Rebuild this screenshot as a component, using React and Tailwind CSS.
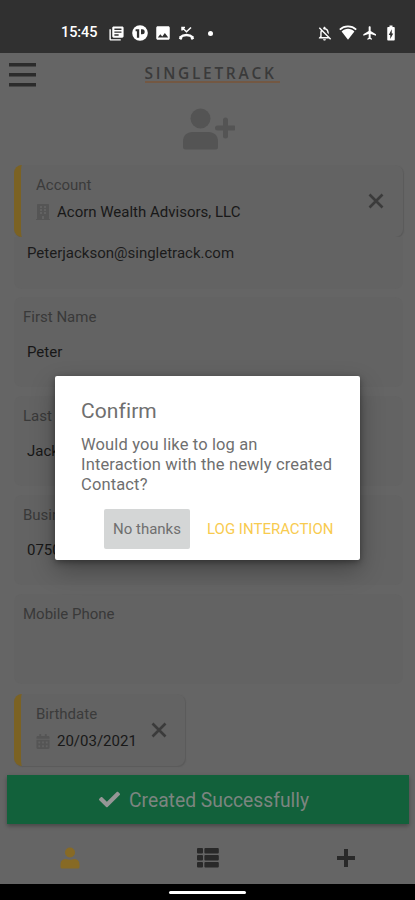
import React from "react";
import { FaCheck, FaBuilding, FaCalendarAlt } from "react-icons/fa";
import {
    MdLibraryBooks,
    MdImage,
    MdFlight,
    MdBatteryChargingFull,
    MdOutlineNotificationsOff,
} from "react-icons/md";

const fields = [
    { label: "First Name", value: "Peter" },
    { label: "Last Name", value: "Jackson" },
    { label: "Business Phone", value: "07500000000" },
    { label: "Mobile Phone", value: "" },
];

// -----------------------------
// Icons
// -----------------------------
const ParkingIcon = () => (
    <svg viewBox="0 0 16 16" className="w-4 h-4">
        <circle cx="8" cy="8" r="7.8" fill="#fff" />
        <path d="M3.6 4.2h3.6v8.6H4.900V6.200H3.600zM9 4.200h1.200a2.500 2.500 0 0 1 0 5H9z" fill="#303030" />
    </svg>
);

const MissedCallIcon = () => (
    <svg viewBox="0 0 17 16" className="w-[17px] h-4" fill="none" stroke="#fff">
        <path d="M4 5.500V2.500h3M4 2.500l4.500 4.300 4.500-4.300" strokeWidth="1.500" />
        <path d="M1.800 12.700c4-3.700 9.400-3.700 13.400 0" strokeWidth="2.400" />
        <path d="M1.500 12.300l2.400 1.500M15.500 12.300l-2.400 1.500" strokeWidth="2.600" />
    </svg>
);

const WifiIcon = () => (
    <svg viewBox="0 0 18 16" className="w-[18px] h-4">
        <path d="M.8 4.6C5.4.4 12.6.4 17.2 4.6" fill="none" stroke="#fff" strokeWidth="1.8" />
        <path d="M2.600 6.400c3.700-3.500 9.100-3.500 12.800 0L9 14.800z" fill="#fff" />
    </svg>
);

const MenuIcon = () => (
    <svg viewBox="0 0 28 24" className="w-7 h-6" fill="#2b2b2b">
        <rect y="0" width="27" height="3.500" />
        <rect y="10" width="27" height="3.500" />
        <rect y="20" width="27" height="3.500" />
    </svg>
);

const CloseIcon = () => (
    <svg viewBox="0 0 24 24" className="w-6 h-6" fill="none">
        <path d="M5.500 5.500l13 13M18.500 5.500l-13 13" stroke="#3b3b3b" strokeWidth="2.600" />
    </svg>
);

const UserPlusIcon = () => (
    <svg viewBox="0 0 52 42" className="w-[52px] h-[42px]" fill="#545454">
        <circle cx="17.500" cy="10.500" r="10" />
        <path d="M0 39v-5.500C0 27.500 4 24 9.500 24h16c5.500 0 9.500 3.500 9.500 9.500V39q0 2.500-2.500 2.500h-30Q0 41.500 0 39z" />
        <path d="M42.500 12v16M34.500 20h16" stroke="#545454" strokeWidth="5" strokeLinecap="round" />
    </svg>
);

const UserIcon = () => (
    <svg viewBox="0 0 20 22" className="w-5 h-[22px]" fill="#876a25">
        <circle cx="10" cy="5.500" r="5" />
        <path d="M.5 20v-2.500c0-3.300 2-5.500 5.500-5.500 2.500 1 5.500 1 8 0 3.500 0 5.500 2.200 5.500 5.500V20q0 1.500-1.500 1.500H2Q.5 21.500.5 20z" />
    </svg>
);

const ListIcon = () => (
    <svg viewBox="0 0 22 20" className="w-[22px] h-5" fill="#292929">
        {[0, 7, 14].map((y) => (
            <g key={y}>
                <rect y={y} width="6" height="5.400" rx="1" />
                <rect x="7.400" y={y} width="14.400" height="5.400" rx="1" />
            </g>
        ))}
    </svg>
);

const PlusIcon = () => (
    <svg viewBox="0 0 20 20" className="w-5 h-5" fill="none">
        <path d="M10 1v18M1 10h18" stroke="#292929" strokeWidth="4" />
    </svg>
);

// -----------------------------
// Layout parts
// -----------------------------
const StatusBar = () => (
    <div className="h-[53px] shrink-0 bg-[#303030] flex items-end justify-between pl-[61px] pr-[15px] pb-3 text-white">
        <div className="flex items-center h-4">
            <span className="text-[14.500px] font-medium leading-4 w-[47px] tracking-[-0.100px]">15:45</span>
            <MdLibraryBooks className="w-[17px] h-[17px]" />
            <span className="ml-[7px]"><ParkingIcon /></span>
            <MdImage className="w-[18px] h-[18px] ml-[6px]" />
            <span className="ml-[6px]"><MissedCallIcon /></span>
            <span className="w-[5px] h-[5px] rounded-full bg-white ml-[13px]" />
        </div>
        <div className="flex items-center h-4">
            <MdOutlineNotificationsOff className="w-[17px] h-[17px]" />
            <span className="ml-[6px]"><WifiIcon /></span>
            <MdFlight className="w-4 h-4 ml-[5px]" />
            <MdBatteryChargingFull className="w-[18px] h-[18px] ml-[4px]" />
        </div>
    </div>
);

const PickerCard = ({ label, value, icon, className }) => (
    <div className={`flex h-[72px] shrink-0 rounded-lg border-l-[7px] border-[#7b6223] bg-[#636363] shadow-[1px_1px_1px_#5a5a5a] ${className}`}>
        <div className="flex-1 pl-[15px] pt-[10px]">
            <div className="text-[15px] leading-5 text-[#3b3b3b]">{label}</div>
            <div className="flex items-center mt-[7px] text-[15px] leading-5 text-[#181818] whitespace-nowrap">
                <span className="w-[21px] text-[#555555]">{icon}</span>
                {value}
            </div>
        </div>
        <div className="self-center"><CloseIcon /></div>
    </div>
);

const Field = ({ label, value }) => (
    <div className="h-[90px] shrink-0 mb-[9px] ml-[14px] mr-3 pl-[9px] pt-[10px] rounded-lg bg-[#636363]">
        <div className="text-[15px] leading-5 text-[#393939]">{label}</div>
        <div className="text-[15px] leading-5 mt-[15px] pl-1 text-[#171717]">{value}</div>
    </div>
);

const ConfirmDialog = () => (
    <div className="absolute left-[55px] top-[376px] w-[305px] h-[184px] rounded-[2px] bg-white text-[#6f6f6f] pl-[26px] pr-[18px] pt-[22px] shadow-[0_10px_24px_rgba(0,0,0,0.3),0_2px_6px_rgba(0,0,0,0.35)]">
        <h2 className="text-[21px] leading-[26px] tracking-[0.100px]">Confirm</h2>
        <p className="text-[16.500px] leading-5 mt-[11px] tracking-[0.140px] whitespace-nowrap">
            Would you like to log an<br />Interaction with the newly created<br />Contact?
        </p>
        <div className="flex justify-end items-center mt-[14px]">
            <button className="w-[86px] h-10 rounded-[2px] bg-[#d4d6d6] text-[15px]">No thanks</button>
            <button className="w-[152px] pl-[17px] text-left h-10 text-[15px] text-[#f8cb4f] whitespace-nowrap">LOG INTERACTION</button>
        </div>
    </div>
);

export default function App() {
    return (
        <div className="relative w-[415px] h-[900px] overflow-hidden flex flex-col bg-[#656565] font-[Roboto,sans-serif]">
            <StatusBar />

            <header className="h-[112px] shrink-0 flex justify-between pl-[9px] pr-7 pt-[10px]">
                <MenuIcon />
                <div className="flex flex-col items-center">
                    <div className="w-[135px] h-5 border-b-2 border-[#735843] text-[15.500px] leading-5 font-[Open_Sans,sans-serif] font-semibold text-[#3a3a3a] tracking-[2.700px] whitespace-nowrap">
                        SINGLETRACK
                    </div>
                    <div className="mt-[25px] -ml-[7px]"><UserPlusIcon /></div>
                </div>
                <div />
            </header>

            <PickerCard
                label="Account"
                value="Acorn Wealth Advisors, LLC"
                icon={<FaBuilding className="w-[14px] h-4" />}
                className="ml-[14px] mr-3 pr-[15px]"
            />
            <div className="h-[52px] shrink-0 mb-2 ml-[14px] mr-3 pl-[13px] pt-[6px] rounded-b-lg bg-[#636363] text-[15px] leading-5 text-[#1b1b1b]">
                Peterjackson@singletrack.com
            </div>

            {fields.map((field) => (
                <Field key={field.label} {...field} />
            ))}

            <PickerCard
                label="Birthdate"
                value="20/03/2021"
                icon={<FaCalendarAlt className="w-[14px] h-[15px]" />}
                className="ml-[14px] mt-px w-[171px] pr-[14px]"
            />

            <div className="h-[49px] shrink-0 mt-[9px] ml-[7px] mr-[6px] bg-[#12613b] shadow-[0_2px_4px_rgba(0,0,0,0.3)] flex items-center pl-[92px] text-[#7c8580]">
                <FaCheck className="w-[21px] h-[21px] mr-[9px] text-[#969696]" />
                <span className="text-[19.300px] leading-6 pt-[2px]">Created Successfully</span>
            </div>

            <nav className="flex-1 flex items-center pt-2 [&>*]:w-1/3">
                <div className="flex justify-center pl-[2px]"><UserIcon /></div>
                <div className="flex justify-center pl-px"><ListIcon /></div>
                <div className="flex justify-center"><PlusIcon /></div>
            </nav>

            <div className="h-4 shrink-0 bg-black flex justify-center pt-[7px]">
                <div className="w-[77px] h-[3px] rounded-full bg-white" />
            </div>

            <ConfirmDialog />
        </div>
    );
}
